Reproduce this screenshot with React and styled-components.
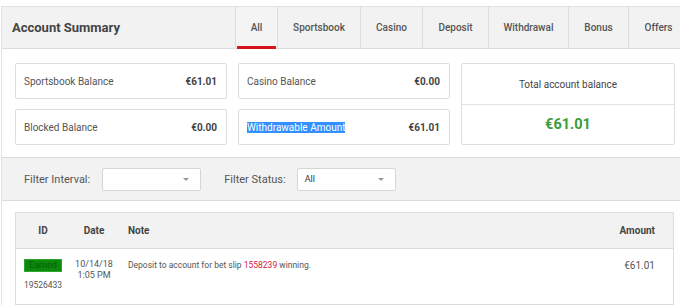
import React from "react";
import styled, { createGlobalStyle } from "styled-components";

const GlobalStyle = createGlobalStyle`
  html, body {
    margin: 0;
    padding: 0;
    background: #fff;
    overflow: hidden;
  }
  body {
    font-family: Roboto, "Liberation Sans", Arial, sans-serif;
    color: #555;
  }
`;

const Panel = styled.div`
  margin: 6px 0 0 1px;
  width: 688px;
  border-left: 1px solid #e2e2e2;
  border-top: 1px solid #e2e2e2;
`;

const Header = styled.div`
  display: flex;
  height: 41px;
  background: #f2f2f2;
  border-bottom: 1px solid #dcdcdc;
`;

const Title = styled.h2`
  flex: 0 0 223px;
  margin: 0;
  padding-left: 10px;
  display: flex;
  align-items: center;
  font-size: 13px;
  font-weight: 700;
  color: #444;
`;

const Tabs = styled.div`
  display: flex;
  flex: 1;
`;

const Tab = styled.div`
  position: relative;
  box-sizing: border-box;
  display: flex;
  align-items: center;
  justify-content: center;
  flex: 0 0 ${(p) => p.w}px;
  border-left: 1px solid #dcdcdc;
  font-size: 10px;
  font-weight: 500;
  color: #555;
  background: ${(p) => (p.active ? "#f4f4f4" : "#f2f2f2")};

  &::after {
    content: "";
    display: ${(p) => (p.active ? "block" : "none")};
    position: absolute;
    left: 1px;
    right: 1px;
    bottom: -1px;
    height: 3px;
    background: #d7141a;
  }
`;

const Balances = styled.div`
  display: flex;
  gap: 11px;
  padding: 14px 0 12px 13px;
`;

const BoxGrid = styled.div`
  display: grid;
  grid-template-columns: 212px 212px;
  grid-auto-rows: 36px;
  column-gap: 11px;
  row-gap: 10px;
`;

const Box = styled.div`
  display: flex;
  align-items: center;
  justify-content: space-between;
  padding: 0 9px 0 8px;
  border: 1px solid #dedede;
  border-radius: 2px;
  font-size: 10px;
`;

const Label = styled.span`
  color: #555;
`;

const Selected = styled.span`
  background: #3390ff;
  color: #fff;
`;

const Value = styled.span`
  font-weight: 700;
  color: #444;
`;

const TotalBox = styled.div`
  width: 212px;
  display: flex;
  flex-direction: column;
  border: 1px solid #dedede;
  border-radius: 2px;
`;

const TotalLabel = styled.div`
  height: 40px;
  display: flex;
  align-items: center;
  justify-content: center;
  border-bottom: 1px solid #e2e2e2;
  font-size: 10px;
  color: #444;
`;

const TotalValue = styled.div`
  flex: 1;
  display: flex;
  align-items: center;
  justify-content: center;
  font-size: 14.5px;
  font-weight: 700;
  color: #3a9d3a;
`;

const FilterBar = styled.div`
  display: flex;
  align-items: center;
  height: 42px;
  padding-left: 22px;
  background: #f2f2f2;
  border-top: 1px solid #dcdcdc;
  border-bottom: 1px solid #dcdcdc;
  font-size: 11px;
  color: #555;
`;

const FilterLabel = styled.span`
  margin-right: ${(p) => p.gap}px;
`;

const Select = styled.div`
  position: relative;
  box-sizing: border-box;
  width: 99px;
  height: 23px;
  margin-right: 23px;
  padding-left: 7px;
  display: flex;
  align-items: center;
  background: #fff;
  border: 1px solid #d6d6d6;
  border-radius: 2px;
  font-size: 9px;
  color: #333;

  &::after {
    content: "";
    position: absolute;
    right: 11px;
    top: 9px;
    border-left: 3px solid transparent;
    border-right: 3px solid transparent;
    border-top: 3px solid #999;
  }
`;

const TableWrap = styled.div`
  padding: 11px 0 0 13px;
`;

const Table = styled.div`
  box-sizing: border-box;
  width: 659px;
  border: 1px solid #dedede;
  border-bottom: none;
`;

const Row = styled.div`
  display: grid;
  grid-template-columns: 54px 48px 1fr 80px;
  align-items: ${(p) => (p.head ? "center" : "start")};
  height: ${(p) => (p.head ? 35 : 55)}px;
  background: ${(p) => (p.head ? "#f2f2f2" : "#fff")};
  border-bottom: 1px solid #dcdcdc;
  font-size: ${(p) => (p.head ? 10 : 8.5)}px;
  font-weight: ${(p) => (p.head ? 700 : 400)};
  color: ${(p) => (p.head ? "#444" : "#555")};
`;

const Cell = styled.div`
  text-align: ${(p) => p.align || "left"};
  padding: ${(p) => p.pad || "0"};
  line-height: ${(p) => p.lh || "normal"};
  font-size: ${(p) => p.size || "inherit"};
`;

const Badge = styled.span`
  display: block;
  width: 36px;
  height: 11px;
  margin: 0 0 8px 8px;
  background: #0b8a0b;
  border: 1px solid #2fa52f;
  color: #0a5d0a;
  font-size: 9px;
  line-height: 11px;
  text-align: center;
`;

const SlipLink = styled.span`
  color: #d4213a;
`;

const tabs = [
  { name: "All", w: 42, active: true },
  { name: "Sportsbook", w: 83 },
  { name: "Casino", w: 62 },
  { name: "Deposit", w: 66 },
  { name: "Withdrawal", w: 80 },
  { name: "Bonus", w: 60 },
  { name: "Offers", w: 60 },
];

export default function App() {
  return (
    <>
      <GlobalStyle />
      <Panel>
        <Header>
          <Title>Account Summary</Title>
          <Tabs>
            {tabs.map((t) => (
              <Tab key={t.name} w={t.w} active={t.active}>
                {t.name}
              </Tab>
            ))}
          </Tabs>
        </Header>

        <Balances>
          <BoxGrid>
            <Box>
              <Label>Sportsbook Balance</Label>
              <Value>€61.01</Value>
            </Box>
            <Box>
              <Label>Casino Balance</Label>
              <Value>€0.00</Value>
            </Box>
            <Box>
              <Label>Blocked Balance</Label>
              <Value>€0.00</Value>
            </Box>
            <Box>
              <Selected>Withdrawable Amount</Selected>
              <Value>€61.01</Value>
            </Box>
          </BoxGrid>
          <TotalBox>
            <TotalLabel>Total account balance</TotalLabel>
            <TotalValue>€61.01</TotalValue>
          </TotalBox>
        </Balances>

        <FilterBar>
          <FilterLabel gap={12}>Filter Interval:</FilterLabel>
          <Select />
          <FilterLabel gap={11}>Filter Status:</FilterLabel>
          <Select>All</Select>
        </FilterBar>

        <TableWrap>
          <Table>
            <Row head>
              <Cell align="center">ID</Cell>
              <Cell align="center">Date</Cell>
              <Cell pad="0 0 0 10px">Note</Cell>
              <Cell align="right" pad="0 18px 0 0">Amount</Cell>
            </Row>
            <Row>
              <Cell pad="10px 0 0 0">
                <Badge>Earned</Badge>
                <Cell align="center">19526433</Cell>
              </Cell>
              <Cell align="center" pad="10px 0 0 0" lh="11px" size="9px">
                10/14/18
                <br />
                1:05 PM
              </Cell>
              <Cell pad="11px 0 0 10px">
                Deposit to account for bet slip <SlipLink>1558239</SlipLink>{" "}
                winning.
              </Cell>
              <Cell align="right" pad="11px 18px 0 0" size="10px">
                €61.01
              </Cell>
            </Row>
          </Table>
        </TableWrap>
      </Panel>
    </>
  );
}
